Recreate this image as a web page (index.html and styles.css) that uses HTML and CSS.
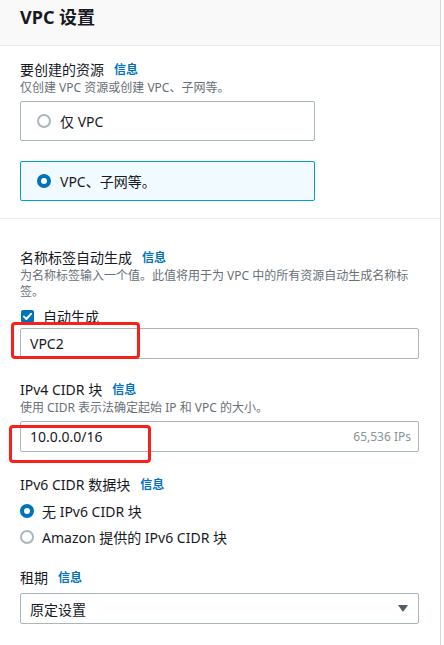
FILE: index.html
```html
<!DOCTYPE html>
<html lang="zh-CN">
<head>
<meta charset="utf-8">
<title>VPC 设置</title>
<link rel="stylesheet" href="styles.css">
</head>
<body>
<div class="panel">
  <header class="panel-header"><h2 class="title">VPC 设置</h2></header>

  <section class="sec sec-first">
    <div class="label">要创建的资源<a class="info">信息</a></div>
    <div class="desc">仅创建 VPC 资源或创建 VPC、子网等。</div>
    <div class="tiles">
      <div class="tile"><span class="radio"></span><span>仅 VPC</span></div>
      <div class="tile tile-on"><span class="radio radio-on"></span><span>VPC、子网等。</span></div>
    </div>
  </section>

  <section class="sec sec-second">
    <div class="label">名称标签自动生成<a class="info">信息</a></div>
    <div class="desc desc-wrap">为名称标签输入一个值。此值将用于为 VPC 中的所有资源自动生成名称标签。</div>
    <div class="check-row">
      <span class="checkbox"><svg width="13" height="13" viewBox="0 0 13 13"><path d="M3 6.6 L5.4 9 L10 3.8" fill="none" stroke="#fff" stroke-width="2" stroke-linecap="round" stroke-linejoin="round"/></svg></span>
      <span>自动生成</span>
    </div>
    <div class="input-wrap wrap-name">
      <div class="input"><span>VPC2</span></div>
      <div class="mark mark-name"></div>
    </div>

    <div class="label label-gap">IPv4 CIDR 块<a class="info">信息</a></div>
    <div class="desc">使用 CIDR 表示法确定起始 IP 和 VPC 的大小。</div>
    <div class="input-wrap wrap-cidr">
      <div class="input"><span>10.0.0.0/16</span><span class="hint">65,536 IPs</span></div>
      <div class="mark mark-cidr"></div>
    </div>

    <div class="label label-gap6">IPv6 CIDR 数据块<a class="info">信息</a></div>
    <div class="radio-list">
      <div class="radio-row"><span class="radio radio-on"></span><span>无 IPv6 CIDR 块</span></div>
      <div class="radio-row"><span class="radio"></span><span>Amazon 提供的 IPv6 CIDR 块</span></div>
    </div>

    <div class="label label-gapt">租期<a class="info">信息</a></div>
    <div class="select">
      <span>原定设置</span>
      <svg class="caret" width="10" height="7" viewBox="0 0 10 7"><polygon points="0,0 10,0 5,7" fill="#545b64"/></svg>
    </div>
  </section>
</div>
</body>
</html>
```

FILE: styles.css
```css
* { box-sizing: border-box; }

html, body {
  margin: 0;
  padding: 0;
  background: #ffffff;
}

body {
  font-family: "Noto Sans", "Noto Sans CJK SC", sans-serif;
  color: #16191f;
  font-size: 14px;
}

.panel {
  width: 441px;
  min-height: 645px;
  border-right: 1px solid #d5dbdb;
  background: #ffffff;
}

.panel-header {
  background: #f9f9f9;
  border-bottom: 1px solid #eaeded;
  height: 46px;
  padding: 6px 20px 0;
}

.title {
  margin: 0;
  font-size: 18px;
  line-height: 22px;
  font-weight: 700;
  color: #16191f;
}

.sec {
  padding: 0 20px;
}

.sec-first {
  padding-top: 14px;
  padding-bottom: 17px;
  border-bottom: 1px solid #eaeded;
}

.sec-second {
  padding-top: 29px;
  padding-right: 21px;
}

.label {
  font-size: 14px;
  line-height: 20px;
  color: #16191f;
  display: flex;
  align-items: center;
}

.info {
  margin-left: 10px;
  font-size: 12px;
  font-weight: 700;
  color: #0073bb;
}

.desc {
  font-size: 12px;
  line-height: 16px;
  color: #687078;
}

.tiles {
  margin-top: 5px;
  width: 295px;
  display: flex;
  flex-direction: column;
  gap: 20px;
}

.tile {
  height: 40px;
  border: 1px solid #aab7b8;
  border-radius: 2px;
  display: flex;
  align-items: center;
  gap: 9px;
  padding-left: 16px;
  font-size: 14px;
  color: #16191f;
}

.tile-on {
  border-color: #00a1c9;
  background: #f1faff;
}

.radio {
  width: 14px;
  height: 14px;
  border-radius: 50%;
  border: 2px solid #aab7b8;
  background: #ffffff;
  flex: none;
}

.radio-on {
  border: 4px solid #0073bb;
  background: #ffffff;
}

.check-row {
  margin-top: 6px;
  height: 20px;
  display: flex;
  align-items: center;
  gap: 9px;
  padding-left: 1px;
}

.checkbox {
  width: 13px;
  height: 13px;
  border-radius: 2px;
  background: #0073bb;
  display: flex;
  flex: none;
}

.input-wrap {
  position: relative;
}

.wrap-name { margin-top: 2px; }
.wrap-cidr { margin-top: 5px; }

.input,
.select {
  height: 31px;
  border: 1px solid #aab7b8;
  border-radius: 2px;
  background: #ffffff;
  display: flex;
  align-items: center;
  justify-content: space-between;
  padding: 0 7px 0 9px;
  font-size: 14px;
  color: #16191f;
}

.hint {
  font-size: 12px;
  color: #879596;
}

.select {
  margin-top: 5px;
  padding-right: 10px;
}

.caret { display: block; }

.mark {
  position: absolute;
  border: 3px solid #f7201a;
  border-radius: 4px;
  pointer-events: none;
}

.mark-name {
  left: -9px;
  top: -6px;
  width: 129px;
  height: 37px;
}

.mark-cidr {
  left: -11px;
  top: 4px;
  width: 142px;
  height: 38px;
}

.label-gap { margin-top: 21px; }
.label-gap6 { margin-top: 23px; }
.label-gapt { margin-top: 18px; }

.radio-list {
  margin-top: 3px;
}

.radio-row {
  height: 26px;
  display: flex;
  align-items: center;
  gap: 8px;
}
```
